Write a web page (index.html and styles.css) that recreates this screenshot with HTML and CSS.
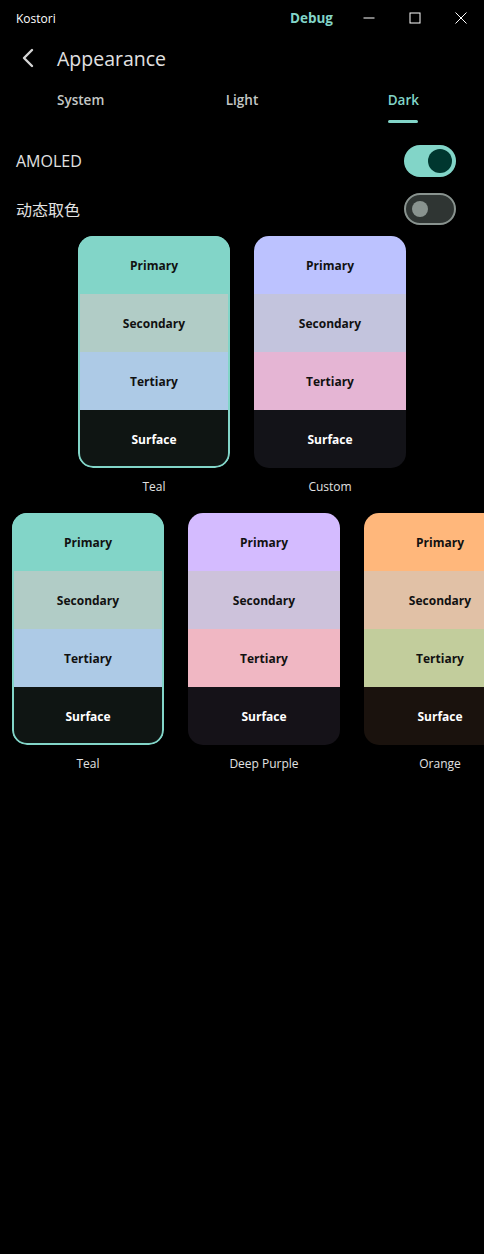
FILE: index.html
```html
<!DOCTYPE html>
<html lang="en">
<head>
  <meta charset="UTF-8">
  <title>Kostori</title>
  <link rel="stylesheet" href="styles.css">
</head>
<body>
  <div class="window">
    <div class="titlebar">
      <span class="app-name">Kostori</span>
      <span class="debug">Debug</span>
      <div class="controls">
        <span class="ctl">
          <svg width="12" height="12" viewBox="0 0 12 12"><path d="M0.5 6h11" stroke="#fff" stroke-width="1"/></svg>
        </span>
        <span class="ctl">
          <svg width="12" height="12" viewBox="0 0 12 12"><rect x="1" y="1" width="10" height="10" fill="none" stroke="#fff" stroke-width="1"/></svg>
        </span>
        <span class="ctl">
          <svg width="12" height="12" viewBox="0 0 12 12"><path d="M0.5 0.5l11 11M11.5 0.5l-11 11" stroke="#fff" stroke-width="1"/></svg>
        </span>
      </div>
    </div>

    <div class="header">
      <span class="back">
        <svg width="14" height="20" viewBox="0 0 14 20"><path d="M11 2L3 10l8 8" fill="none" stroke="#d6d6d6" stroke-width="2.4" stroke-linecap="round" stroke-linejoin="round"/></svg>
      </span>
      <h1>Appearance</h1>
    </div>

    <div class="tabs">
      <div class="tab">System</div>
      <div class="tab">Light</div>
      <div class="tab active">Dark</div>
    </div>

    <div class="row">
      <span class="row-label">AMOLED</span>
      <span class="switch on"><span class="thumb"></span></span>
    </div>
    <div class="row">
      <span class="row-label">动态取色</span>
      <span class="switch off"><span class="thumb"></span></span>
    </div>

    <div class="scheme-row centered">
      <div class="scheme">
        <div class="card selected">
          <div class="part" style="background:#82d5c8">Primary</div>
          <div class="part" style="background:#b1ccc6">Secondary</div>
          <div class="part" style="background:#adcae6">Tertiary</div>
          <div class="part surface" style="background:#0f1513">Surface</div>
        </div>
        <div class="name">Teal</div>
      </div>
      <div class="scheme">
        <div class="card">
          <div class="part" style="background:#bcc2ff">Primary</div>
          <div class="part" style="background:#c3c4dd">Secondary</div>
          <div class="part" style="background:#e5b5d4">Tertiary</div>
          <div class="part surface" style="background:#131318">Surface</div>
        </div>
        <div class="name">Custom</div>
      </div>
    </div>

    <div class="scheme-row scroll">
      <div class="scheme">
        <div class="card selected">
          <div class="part" style="background:#82d5c8">Primary</div>
          <div class="part" style="background:#b1ccc6">Secondary</div>
          <div class="part" style="background:#adcae6">Tertiary</div>
          <div class="part surface" style="background:#0f1513">Surface</div>
        </div>
        <div class="name">Teal</div>
      </div>
      <div class="scheme">
        <div class="card">
          <div class="part" style="background:#d4bbff">Primary</div>
          <div class="part" style="background:#cdc2db">Secondary</div>
          <div class="part" style="background:#f0b7c3">Tertiary</div>
          <div class="part surface" style="background:#151218">Surface</div>
        </div>
        <div class="name">Deep Purple</div>
      </div>
      <div class="scheme">
        <div class="card">
          <div class="part" style="background:#ffb77b">Primary</div>
          <div class="part" style="background:#e1c1a6">Secondary</div>
          <div class="part" style="background:#c2cd9c">Tertiary</div>
          <div class="part surface" style="background:#1a120d">Surface</div>
        </div>
        <div class="name">Orange</div>
      </div>
    </div>
  </div>
</body>
</html>
```

FILE: styles.css
```css
body {
  margin: 0;
  padding: 0;
  background: #000;
  font-family: "Open Sans", "Noto Sans", "Noto Sans CJK SC", sans-serif;
  color: #e2e2e2;
}
.window {
  width: 484px;
  height: 1254px;
  overflow: hidden;
  background: #000;
}
.titlebar {
  height: 36px;
  display: flex;
  align-items: center;
  padding-left: 16px;
}
.app-name {
  font-size: 12px;
  color: #fff;
  flex: 1;
}
.debug {
  color: #82d5c8;
  font-weight: bold;
  font-size: 13.5px;
  margin-right: 13px;
}
.controls {
  display: flex;
  height: 36px;
}
.ctl {
  width: 46px;
  display: flex;
  align-items: center;
  justify-content: center;
}
.header {
  height: 44px;
  display: flex;
  align-items: center;
}
.back {
  width: 57px;
  display: flex;
  justify-content: flex-start;
  padding-left: 21px;
  box-sizing: border-box;
}
.header h1 {
  margin: 0;
  font-size: 19.5px;
  font-weight: normal;
  color: #e2e2e2;
}
.tabs {
  display: flex;
  height: 44px;
  margin-bottom: 13px;
}
.tab {
  flex: 1;
  display: flex;
  align-items: center;
  justify-content: center;
  padding-bottom: 4px;
  font-size: 13.5px;
  font-weight: 600;
  color: #c4c8c6;
  position: relative;
}
.tab.active {
  color: #82d5c8;
}
.tab.active::after {
  content: "";
  position: absolute;
  bottom: 1px;
  left: 50%;
  width: 30px;
  margin-left: -15px;
  height: 3px;
  border-radius: 2px;
  background: #82d5c8;
}
.row {
  height: 48px;
  display: flex;
  align-items: center;
  justify-content: space-between;
  padding: 0 28px 0 16px;
}
.row-label {
  font-size: 16px;
  color: #e2e2e2;
}
.switch {
  width: 52px;
  height: 32px;
  border-radius: 16px;
  box-sizing: border-box;
  display: flex;
  align-items: center;
}
.switch.on {
  background: #82d5c8;
  justify-content: flex-end;
  padding-right: 4px;
}
.switch.on .thumb {
  width: 24px;
  height: 24px;
  border-radius: 50%;
  background: #00372f;
}
.switch.off {
  background: #2f3533;
  border: 2px solid #89938f;
  padding-left: 6px;
}
.switch.off .thumb {
  width: 16px;
  height: 16px;
  border-radius: 50%;
  background: #89938f;
}
.scheme-row {
  display: flex;
  gap: 24px;
  margin-top: 3px;
}
.scheme-row.centered {
  justify-content: center;
}
.scheme-row.scroll {
  padding-left: 12px;
  margin-top: 18px;
}
.scheme {
  width: 152px;
  flex-shrink: 0;
  display: flex;
  flex-direction: column;
  align-items: center;
}
.card {
  width: 152px;
  height: 232px;
  border-radius: 15px;
  overflow: hidden;
  display: flex;
  flex-direction: column;
  position: relative;
}
.card.selected::after {
  content: "";
  position: absolute;
  inset: 0;
  border: 2px solid #82d5c8;
  border-radius: 15px;
}
.part {
  flex: 1;
  display: flex;
  align-items: center;
  justify-content: center;
  font-size: 12px;
  font-weight: bold;
  color: #111;
}
.part.surface {
  color: #fff;
}
.name {
  margin-top: 10px;
  font-size: 12px;
  color: #e2e2e2;
}
```
